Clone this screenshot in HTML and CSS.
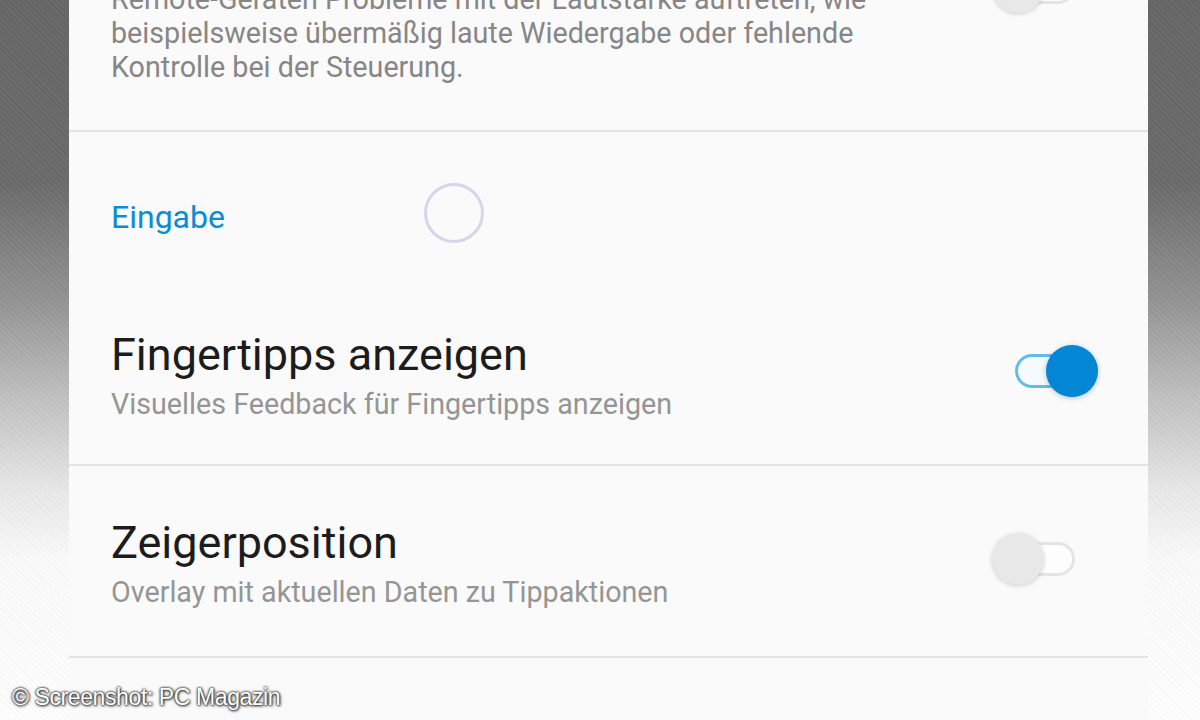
FILE: index.html
```html
<!DOCTYPE html>
<html lang="de">
<head>
<meta charset="utf-8">
<title>Einstellungen</title>
<link rel="stylesheet" href="styles.css">
</head>
<body>
<div class="page">
  <main class="panel">
    <section class="item item-first">
      <div class="item-text">
        <p class="desc">Remote-Geräten Probleme mit der Lautstärke auftreten, wie<br>beispielsweise übermäßig laute Wiedergabe oder fehlende<br>Kontrolle bei der Steuerung.</p>
      </div>
      <div class="switch switch-top">
        <span class="track"></span>
        <span class="thumb"></span>
      </div>
    </section>

    <section class="category">
      <h2 class="category-title">Eingabe</h2>
      <span class="spinner"></span>
    </section>

    <section class="item">
      <div class="item-text">
        <h3 class="title">Fingertipps anzeigen</h3>
        <p class="summary">Visuelles Feedback für Fingertipps anzeigen</p>
      </div>
      <div class="switch on">
        <span class="track"></span>
        <span class="thumb"></span>
      </div>
    </section>

    <section class="item item-last">
      <div class="item-text">
        <h3 class="title">Zeigerposition</h3>
        <p class="summary">Overlay mit aktuellen Daten zu Tippaktionen</p>
      </div>
      <div class="switch">
        <span class="track"></span>
        <span class="thumb"></span>
      </div>
    </section>
  </main>
</div>
<div class="credit">© Screenshot: PC Magazin</div>
</body>
</html>
```

FILE: styles.css
```css
html, body {
  margin: 0;
  padding: 0;
  height: 720px;
  overflow: hidden;
}

body {
  font-family: Roboto, "Noto Sans", sans-serif;
  background-color: #ffffff;
  background-image:
    repeating-linear-gradient(45deg, rgba(255,255,255,0.03) 0 2px, rgba(0,0,0,0.025) 2px 4px),
    linear-gradient(180deg, #666666 0px, #6a6a6a 180px, #939393 300px, #c2c2c2 400px, #e8e8e8 490px, #fbfbfb 560px, #ffffff 720px);
  position: relative;
}

.page {
  height: 720px;
}

.panel {
  margin-left: 69px;
  width: 1079px;
  height: 720px;
  background: #fafafa;
  overflow: hidden;
}

.item {
  display: flex;
  align-items: center;
  padding: 52px 50px 43px 42px;
  border-bottom: 2px solid #e3e3e3;
  position: relative;
}

.item-first {
  padding-top: 0;
  padding-bottom: 46px;
  margin-top: -18px;
}

.item-last {
  padding-bottom: 47px;
}

.item-text {
  flex: 1;
  min-width: 0;
}

.desc {
  margin: 0;
  font-size: 28.7px;
  line-height: 34px;
  color: #868686;
}

.title {
  margin: 0;
  font-weight: 400;
  font-size: 45px;
  line-height: 50px;
  color: #1c1c1c;
}

.summary {
  margin: 7px 0 0;
  font-size: 28.7px;
  line-height: 34px;
  color: #959595;
}

.category {
  position: relative;
  padding: 66px 42px 42px;
}

.category-title {
  margin: 0;
  font-weight: 400;
  font-size: 32px;
  line-height: 38px;
  color: #0b8dd4;
}

.spinner {
  position: absolute;
  left: 355px;
  top: 51px;
  width: 60px;
  height: 60px;
  border-radius: 50%;
  border: 3px solid #d6d6ea;
  box-sizing: border-box;
}

.switch {
  position: relative;
  width: 106px;
  height: 52px;
  margin-bottom: 10px;
  flex: none;
}

.track {
  position: absolute;
  left: 23px;
  top: 9px;
  width: 60px;
  height: 34px;
  border-radius: 17px;
  border: 3px solid #e4e4e4;
  background: #fdfdfd;
  box-sizing: border-box;
}

.thumb {
  position: absolute;
  left: 0;
  top: 0;
  width: 52px;
  height: 52px;
  border-radius: 50%;
  background: #e8e8e8;
  box-shadow: 0 1px 4px rgba(0,0,0,0.18);
}

.switch.on .track {
  border-color: #62bcea;
  background: #f4fafe;
}

.switch.on .thumb {
  left: auto;
  right: 0;
  background: #0386d3;
  box-shadow: 0 1px 5px rgba(0,60,120,0.3);
}

.switch-top {
  position: absolute;
  right: 50px;
  top: -21px;
}

.credit {
  position: absolute;
  left: 12px;
  top: 683px;
  font-family: "Liberation Sans", Arial, sans-serif;
  font-size: 23px;
  line-height: 28px;
  color: #ffffff;
  letter-spacing: -0.4px;
  text-shadow: 0 0 2px #222, 0 0 3px #333, 1px 1px 3px #444;
}
```
